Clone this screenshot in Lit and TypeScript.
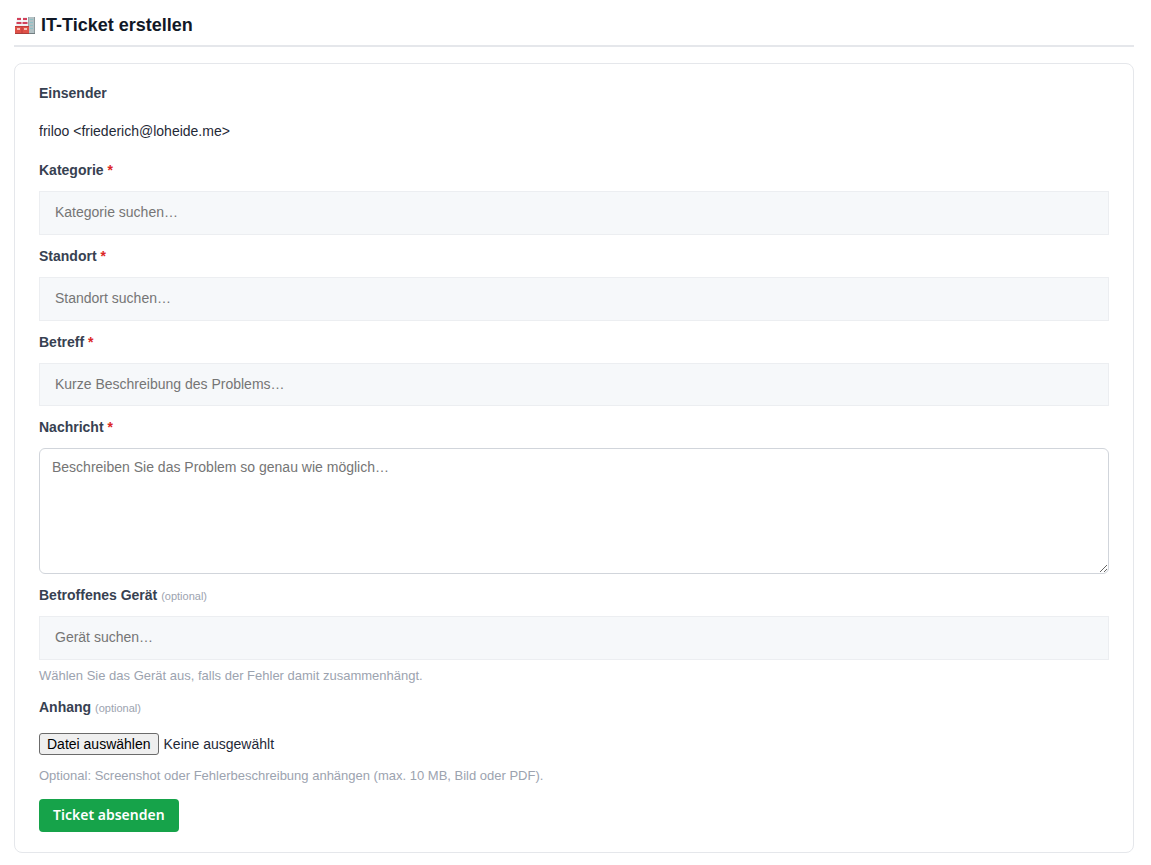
import { LitElement, html, css } from "lit";
import { customElement, state } from "lit/decorators.js";

@customElement("app-root")
export class AppRoot extends LitElement {
  @state() private fileName = "";

  static styles = css`
    :host {
      display: block;
      box-sizing: border-box;
      padding: 12px 17px 12px 14px;
      background: #fff;
      color: #1f2937;
      font-family: "Liberation Sans", Arial, sans-serif;
      font-size: 14px;
      line-height: 20px;
    }
    *,
    *::before {
      box-sizing: border-box;
    }
    .header {
      display: flex;
      align-items: center;
      gap: 5px;
      padding-bottom: 7px;
      border-bottom: 2px solid #e5e7eb;
      margin-bottom: 16px;
    }
    .logo {
      width: 22px;
      height: 20px;
      flex: none;
    }
    .title {
      margin: 0;
      font-size: 18px;
      line-height: 26px;
      font-weight: 700;
      color: #111827;
    }
    .card {
      display: flex;
      flex-direction: column;
      gap: 11px;
      padding: 19px 24px 20px;
      border: 1px solid #e5e7eb;
      border-radius: 8px;
    }
    .field {
      display: flex;
      flex-direction: column;
      gap: 11px;
    }
    .label {
      font-size: 14px;
      font-weight: 700;
      color: #374151;
    }
    .required {
      color: #dc2626;
    }
    .optional {
      font-size: 11px;
      line-height: 11px;
      font-weight: 400;
      color: #9ca3af;
    }
    .sender {
      gap: 18px;
      margin-bottom: 8px;
    }
    .value {
      margin: 0;
      font-size: 14px;
    }
    .control {
      display: block;
      width: 100%;
      margin: 0;
      font: inherit;
      color: inherit;
    }
    .control::placeholder {
      color: #757575;
    }
    .search,
    .line {
      height: 44px;
      padding: 0 15px 2px;
      border: 1px solid #eceef1;
      border-radius: 0;
      background: #f6f8fa;
    }
    .line {
      height: 43px;
    }
    .message {
      height: 126px;
      padding: 8px 12px;
      border: 1px solid #d1d5db;
      border-radius: 6px;
      background: #fff;
      resize: vertical;
    }
    .hint {
      margin: 0;
      font-size: 13px;
      color: #9ca3af;
    }
    .near {
      margin-top: -5px;
    }
    .picker {
      display: grid;
      justify-content: start;
      margin-top: 5px;
    }
    .file,
    .face {
      grid-area: 1 / 1;
    }
    .file {
      z-index: 1;
      width: 100%;
      height: 22px;
      opacity: 0;
      cursor: pointer;
    }
    .face {
      display: flex;
      align-items: center;
      gap: 5px;
    }
    .choose {
      padding: 0 7px;
      border: 1px solid #6b6b6b;
      border-radius: 3px;
      background: #efefef;
      color: #000;
    }
    .file:focus-visible + .face .choose {
      outline: 2px solid #2563eb;
    }
    .submit {
      align-self: flex-start;
      margin-top: 2px;
      padding: 6px 14px 7px;
      border: 0;
      border-radius: 4px;
      background: #16a34a;
      color: #fff;
      font-family: "Noto Sans", sans-serif;
      font-size: 14px;
      font-weight: 600;
      line-height: 20px;
      cursor: pointer;
    }
  `;

  private onFile(e: Event) {
    this.fileName = (e.target as HTMLInputElement).files?.[0]?.name ?? "";
  }

  private textField(id: string, label: string, placeholder: string, kind = "search") {
    return html`
      <div class="field">
        <label class="label" for=${id}>${label} <span class="required">*</span></label>
        <input class="control ${kind}" id=${id} type="text" placeholder=${placeholder} />
      </div>
    `;
  }

  render() {
    return html`
      <header class="header">
        <svg class="logo" viewBox="0 0 22 20" aria-hidden="true">
          <path d="M14 2h7v17h-7z" fill="#b3c1c4" />
          <path d="M20 2h1v17h-1z" fill="#8c989b" />
          <path d="M14 2h1v17h-1z" fill="#98a5a8" />
          <path d="M16 4h3v1h-3zM16 7h3v1h-3zM16 10h3v1h-3zM16 13h3v1h-3z" fill="#8fc1c6" />
          <path d="M3 2h4l1 9H2zM9 2h4l1 9H8z" fill="#f1eff0" />
          <path d="M3 3h4v2H3zM9 3h4v2H9zM2.5 7h5v2h-5zM8.5 7h5v2h-5z" fill="#d2405a" />
          <path d="M1 11h7v8H1zM8 11h7v8H8z" fill="#df5148" />
          <path d="M1 11h14v1H1zM7.5 11h1v8h-1z" fill="#c23c3a" />
          <path d="M3 13h3v2H3zM10 13h3v2h-3z" fill="#f7c0b6" />
          <path d="M1 18h14v1H1z" fill="#a9403d" />
          <path d="M15 18h6v1h-6z" fill="#727e81" />
        </svg>
        <h1 class="title">IT-Ticket erstellen</h1>
      </header>
      <form class="card" @submit=${(e: Event) => e.preventDefault()}>
        <div class="field sender">
          <span class="label">Einsender</span>
          <p class="value">friloo &lt;friederich@loheide.me&gt;</p>
        </div>
        ${this.textField("kategorie", "Kategorie", "Kategorie suchen…")}
        ${this.textField("standort", "Standort", "Standort suchen…")}
        ${this.textField("betreff", "Betreff", "Kurze Beschreibung des Problems…", "line")}
        <div class="field">
          <label class="label" for="nachricht">Nachricht <span class="required">*</span></label>
          <textarea class="control message" id="nachricht" placeholder="Beschreiben Sie das Problem so genau wie möglich…"></textarea>
        </div>
        <div class="field">
          <label class="label" for="geraet">Betroffenes Gerät <span class="optional">(optional)</span></label>
          <input class="control search" id="geraet" type="text" placeholder="Gerät suchen…" />
          <p class="hint near">Wählen Sie das Gerät aus, falls der Fehler damit zusammenhängt.</p>
        </div>
        <div class="field">
          <label class="label" for="anhang">Anhang <span class="optional">(optional)</span></label>
          <div class="picker">
            <input class="file" id="anhang" type="file" accept="image/*,application/pdf" @change=${this.onFile} />
            <div class="face" aria-hidden="true">
              <span class="choose">Datei auswählen</span>
              <span>${this.fileName || "Keine ausgewählt"}</span>
            </div>
          </div>
          <p class="hint">Optional: Screenshot oder Fehlerbeschreibung anhängen (max. 10 MB, Bild oder PDF).</p>
        </div>
        <button class="submit" type="submit">Ticket absenden</button>
      </form>
    `;
  }
}
